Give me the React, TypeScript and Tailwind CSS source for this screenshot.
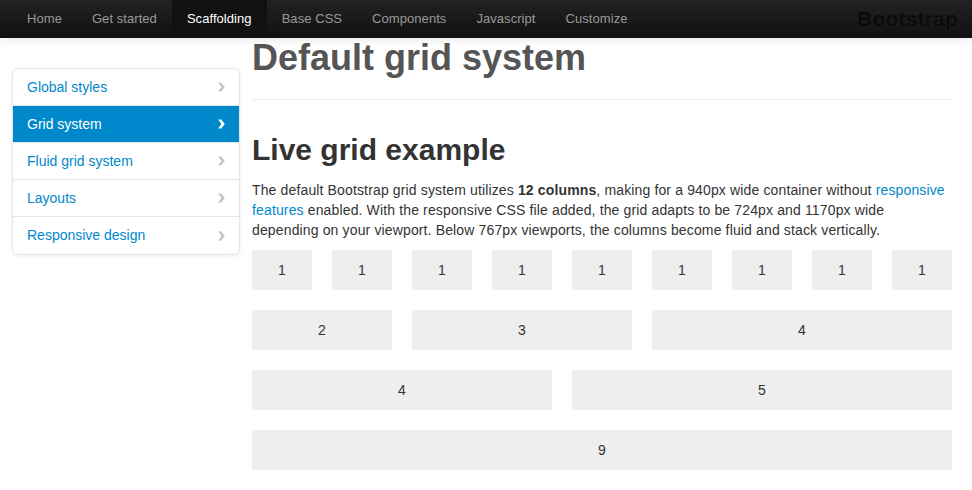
import React from 'react';

const navItems = ['Home', 'Get started', 'Scaffolding', 'Base CSS', 'Components', 'Javascript', 'Customize'];
const sideItems = ['Global styles', 'Grid system', 'Fluid grid system', 'Layouts', 'Responsive design'];

const rows: number[][] = [
    [1, 1, 1, 1, 1, 1, 1, 1, 1],
    [2, 3, 4],
    [4, 5],
    [9],
];

const spanClass: Record<number, string> = {
    1: 'col-span-1',
    2: 'col-span-2',
    3: 'col-span-3',
    4: 'col-span-4',
    5: 'col-span-5',
    9: 'col-span-9',
};

const Chevron: React.FC<{ className?: string }> = ({ className }) => (
    <svg viewBox="0 0 8 10" className={className} fill="currentColor">
        <polygon points="1,0.5 4.2,0.5 7.8,5 4.2,9.5 1,9.5 4.5,5" />
    </svg>
);

const Navbar: React.FC = () => (
    <div className="h-[38px] bg-gradient-to-b from-[#222222] to-[#111111] shadow-[0_1px_10px_rgba(0,0,0,0.1)] flex items-stretch pl-3 pr-[14px] relative z-10">
        <ul className="flex items-stretch tracking-[0.06px]">
            {navItems.map((item) => (
                <li
                    key={item}
                    className={
                        item === 'Scaffolding'
                            ? 'px-[15px] flex items-center bg-[#111111] text-white text-[13px]'
                            : 'px-[15px] flex items-center text-[#999999] text-[13px]'
                    }
                >
                    {item}
                </li>
            ))}
        </ul>
        <div className="ml-auto flex items-center text-[21px] tracking-[0.2px] font-bold text-[#0a0a0a] [text-shadow:0_0_1px_#2a2a2a]">
            Bootstrap
        </div>
    </div>
);

const Sidebar: React.FC = () => (
    <ul className="w-[228px] mt-[30px] self-start bg-white border border-[#e5e5e5] rounded-md shadow-[0_1px_4px_rgba(0,0,0,0.065)] overflow-hidden">
        {sideItems.map((item, i) => {
            const active = item === 'Grid system';
            return (
                <li
                    key={item}
                    className={
                        (i < sideItems.length - 1 ? 'border-b border-[#e5e5e5] ' : '') +
                        (active ? 'bg-[#0088cc] text-white ' : 'text-[#0088cc] ') +
                        'h-[37px] px-[14px] flex items-center justify-between text-[14px]'
                    }
                >
                    <span>{item}</span>
                    <Chevron className={active ? 'w-2 h-[10px] text-white' : 'w-2 h-[10px] text-[#c4c4c4]'} />
                </li>
            );
        })}
    </ul>
);

const App: React.FC = () => {
    return (
        <div className="min-h-screen bg-white font-['Liberation_Sans',Arial,sans-serif] text-[#333333]">
            <Navbar />
            <div className="flex gap-3 pl-3">
                <Sidebar />
                <div className="w-[700px]">
                    <div className="border-b border-[#eeeeee] pb-[21px]">
                        <h1 className="text-[36px] leading-[40px] font-bold text-[#555555]">Default grid system</h1>
                    </div>
                    <h2 className="mt-[30px] text-[30px] leading-[40px] font-bold text-[#333333]">Live grid example</h2>
                    <p className="mt-[10px] mb-[10px] text-[14px] leading-5 tracking-[0.14px]">
                        The default Bootstrap grid system utilizes <strong>12 columns</strong>, making for a 940px wide container without{' '}
                        <span className="text-[#0088cc]">responsive features</span> enabled. With the responsive CSS file added, the grid adapts to be 724px and 1170px wide
                        <br />
                        depending on your viewport. Below 767px viewports, the columns become fluid and stack vertically.
                    </p>
                    <div className="grid grid-cols-[repeat(9,60px)] gap-5">
                        {rows.map((row, r) =>
                            row.map((n, c) => (
                                <div
                                    key={r + '-' + c}
                                    className={spanClass[n] + ' h-10 bg-[#eeeeee] rounded-[3px] flex items-center justify-center text-[14px] text-[#333333]'}
                                >
                                    {n}
                                </div>
                            ))
                        )}
                    </div>
                </div>
            </div>
        </div>
    );
};

export default App;
